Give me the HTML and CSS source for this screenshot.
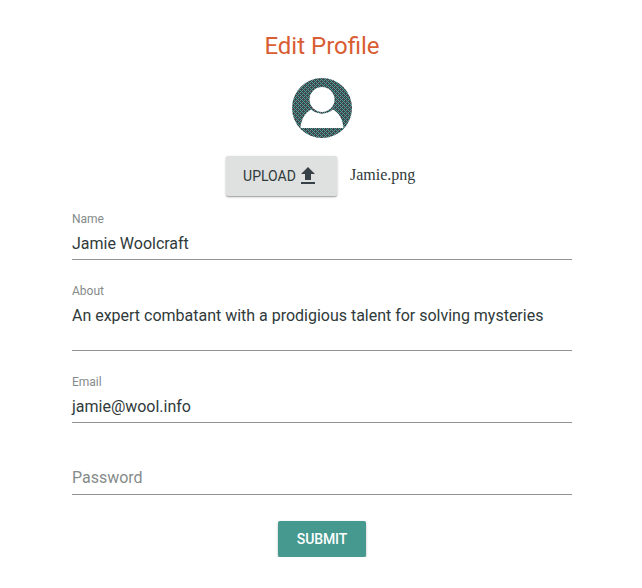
FILE: index.html
```html
<!DOCTYPE html>
<html lang="en">
<head>
<meta charset="utf-8">
<title>Edit Profile</title>
<link rel="stylesheet" href="styles.css">
</head>
<body>
<form class="profile">
  <h1 class="title">Edit Profile</h1>
  <svg class="avatar" viewBox="0 0 60 60" aria-hidden="true">
    <defs>
      <pattern id="weave" width="4" height="4" patternUnits="userSpaceOnUse">
        <rect width="4" height="4" fill="#3a454d"/>
        <path d="M0 0h1v1H0zM2 2h1v1H2zM1 1h1v1H1zM3 3h1v1H3z" fill="#43a598" shape-rendering="crispEdges"/>
        <path d="M2 0h1v1H2zM0 2h1v1H0z" fill="#7d8686" shape-rendering="crispEdges"/>
      </pattern>
    </defs>
    <circle cx="30" cy="30" r="30" fill="url(#weave)"/>
    <path d="M8.500 50C9 41 14 34 19 31.500C25 37 35 37 41 31.500C46 34 51 41 51.500 50Z" fill="#fff"/>
    <circle cx="30" cy="21.500" r="12.500" fill="#fff"/>
  </svg>
  <div class="upload-row">
    <button type="button" class="button upload">UPLOAD
      <svg class="upload-icon" viewBox="0 0 24 24" aria-hidden="true"><path d="M9 16h6v-6h4l-7-7-7 7h4zm-4 2h14v2H5z"/></svg>
    </button>
    <span class="filename">Jamie.png</span>
  </div>
  <div class="field first">
    <span class="label">Name</span>
    <div class="value">Jamie Woolcraft</div>
  </div>
  <div class="field about">
    <span class="label">About</span>
    <div class="value">An expert combatant with a prodigious talent for solving mysteries</div>
  </div>
  <div class="field">
    <span class="label">Email</span>
    <div class="value">jamie@wool.info</div>
  </div>
  <div class="field password">
    <div class="value placeholder">Password</div>
  </div>
  <button type="button" class="button submit">SUBMIT</button>
</form>
</body>
</html>
```
FILE: styles.css
```css
body {
  margin: 0;
  background: #fff;
  font-family: Roboto, "Liberation Sans", sans-serif;
  color: #303a3b;
}
.profile {
  display: flex;
  flex-direction: column;
  align-items: center;
  width: 500px;
  margin-left: 72px;
  padding-top: 30px;
}
.title {
  margin: 0;
  font-size: 24px;
  line-height: 32px;
  font-weight: 400;
  color: #d95d33;
}
.avatar {
  width: 60px;
  height: 60px;
  margin-top: 16px;
}
.upload-row {
  display: flex;
  align-items: center;
  align-self: flex-start;
  margin: 18px 0 0 154px;
  gap: 13px;
}
.button {
  display: flex;
  align-items: center;
  justify-content: center;
  box-sizing: border-box;
  border: 0;
  border-radius: 2px;
  padding: 0;
  font: 500 14px/36px Roboto, sans-serif;
  box-shadow: 0 1px 3px rgba(0, 0, 0, .2), 0 1px 1px rgba(0, 0, 0, .24);
}
.upload {
  width: 111px;
  height: 40px;
  background: #dfe1e0;
  color: #303a3b;
  font-weight: 400;
}
.upload-icon {
  width: 24px;
  height: 24px;
  fill: #373f47;
}
.filename {
  position: relative;
  top: -1px;
  font-family: "Liberation Serif", serif;
  font-size: 16px;
}
.field {
  width: 500px;
  height: 72px;
  box-sizing: border-box;
  padding-top: 24px;
}
.first {
  height: 64px;
  padding-top: 16px;
}
.label {
  display: block;
  font-size: 12px;
  line-height: 14px;
  color: #858b8a;
}
.value {
  box-sizing: border-box;
  height: 26px;
  margin-top: 8px;
  border-bottom: 1px solid #919292;
  font-size: 16px;
  line-height: 20px;
  letter-spacing: -.01px;
}
.about {
  height: 91px;
}
.about .value {
  height: 45px;
}
.password .value {
  height: 27px;
  margin-top: 21px;
}
.placeholder {
  color: #858b8a;
}
.submit {
  width: 88px;
  height: 36px;
  margin-top: 26px;
  background: #45998f;
  color: #fff;
  letter-spacing: -.1px;
}
```
